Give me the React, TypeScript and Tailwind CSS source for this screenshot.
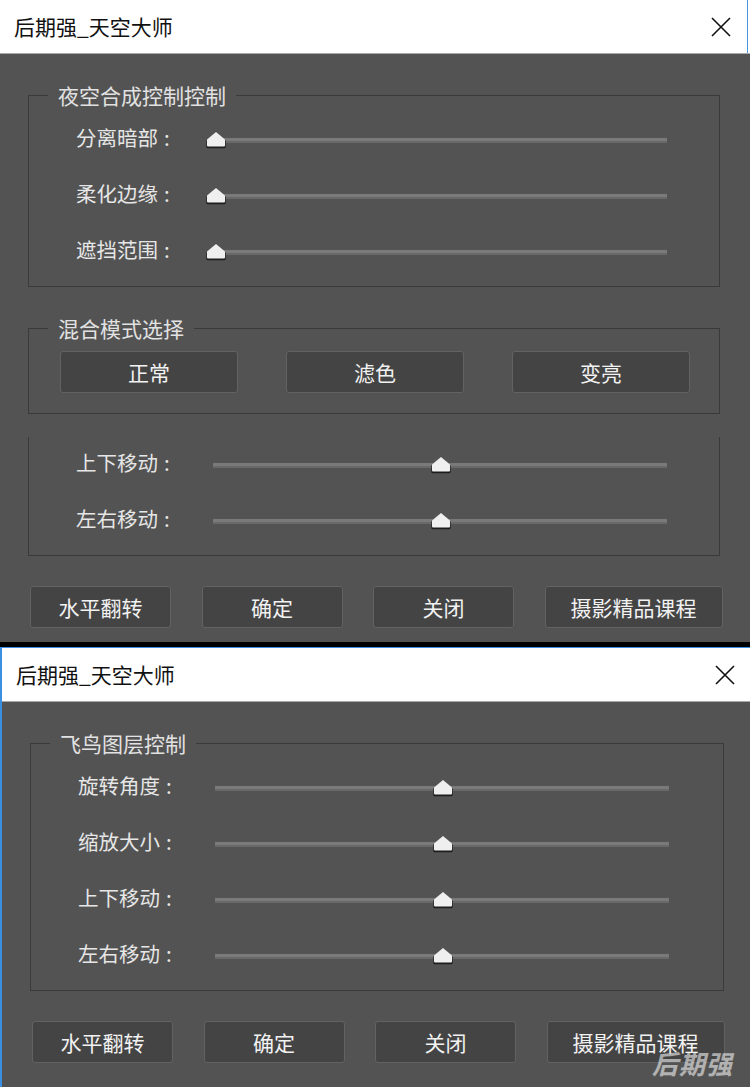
import React from "react";

const FONT = "font-['Noto_Sans_CJK_SC','Noto_Sans',sans-serif]";

function Thumb() {
  return (
    <svg width="22" height="18" viewBox="0 0 22 18">
      <path d="M11 2.2 L20.6 9.6 V16 Q20.6 17.2 19.4 17.2 H2.6 Q1.4 17.2 1.4 16 V9.6 Z" fill="#1c1c1c" />
      <path d="M11 1 L20 8.4 V14.6 Q20 15.6 19 15.6 H3 Q2 15.6 2 14.6 V8.4 Z" fill="#efefef" />
    </svg>
  );
}

function CloseX() {
  return (
    <svg width="20" height="20" viewBox="0 0 20 20">
      <path d="M1 1 L19 19 M19 1 L1 19" stroke="#111" strokeWidth="1.6" fill="none" />
    </svg>
  );
}

function SliderRow({ label, value }: { label: string; value: number }) {
  return (
    <div className="flex h-[56px] items-center pl-[47px]">
      <span className="-mt-[6px] flex w-[137px] shrink-0 text-[20.5px] leading-[24px] text-[#e6e6e6]">
        <span>{label}</span>
        <span className="ml-[6px]">:</span>
      </span>
      <div className="relative h-[5px] w-[454px] shrink-0">
        <div className="h-[3px] bg-[#7a7a7a]" />
        <div className="h-[2px] bg-[#696969]" />
        <div className="absolute top-1/2 -translate-y-1/2" style={{ left: 3 + value * 449 - 11 }}>
          <Thumb />
        </div>
      </div>
    </div>
  );
}

function Btn({ children, wide }: { children: React.ReactNode; wide?: boolean }) {
  return (
    <div
      className={
        "flex h-[42px] shrink-0 items-center justify-center rounded-[3px] border border-[#626262] bg-[#444444] text-[21px] leading-[24px] text-[#f2f2f2] " +
        (wide ? "w-[178px]" : "w-[141px]")
      }
    >
      {children}
    </div>
  );
}

function Group({ title, children, cls }: { title: string; children: React.ReactNode; cls: string }) {
  return (
    <fieldset className={"mx-[28px] border border-[#3a3a3a] " + cls}>
      <legend className="ml-[19px] px-[10px] text-[21px] leading-[24px] text-[#e2e2e2]">{title}</legend>
      {children}
    </fieldset>
  );
}

function TitleBar({ second }: { second?: boolean }) {
  return (
    <div className="flex h-[53px] w-full bg-white">
      <div
        className={
          "flex h-full items-center justify-between " +
          (second ? "w-[750px] shrink-0 pl-[14px] pr-[17px]" : "w-[748px] border-r border-[#4a95e0] pl-[14px] pr-[16px]")
        }
      >
        <span className="-mt-[1px] text-[21px] leading-[24px] text-[#111]">后期强_天空大师</span>
        <CloseX />
      </div>
    </div>
  );
}

function BottomButtons() {
  return (
    <div className="mt-[30px] flex gap-[30.5px] pl-[30px]">
      <Btn>水平翻转</Btn>
      <Btn>确定</Btn>
      <Btn>关闭</Btn>
      <Btn wide>摄影精品课程</Btn>
    </div>
  );
}

export default function App() {
  return (
    <div className={"w-[750px] h-[1087px] overflow-hidden bg-[#535353] " + FONT}>
      {/* Dialog 1 */}
      <div className="w-[750px]">
        <TitleBar />
        <div className="h-[1px] bg-[#a9a9a9]" />
        <div className="flex h-[588px] w-[748px] flex-col bg-[#535353] pt-[29px]">
          <Group title="夜空合成控制控制" cls="pt-[5px] pb-[6px]">
            <SliderRow label="分离暗部" value={0} />
            <SliderRow label="柔化边缘" value={0} />
            <SliderRow label="遮挡范围" value={0} />
          </Group>
          <Group title="混合模式选择" cls="mt-[29px] pt-[11px] pb-[20px]">
            <div className="flex w-[661px] justify-between pl-[31px]">
              <Btn wide>正常</Btn>
              <Btn wide>滤色</Btn>
              <Btn wide>变亮</Btn>
            </div>
          </Group>
          <div className="mx-[28px] mt-[23px] border-x border-b border-[#3a3a3a] pb-[6px]">
            <SliderRow label="上下移动" value={0.5} />
            <SliderRow label="左右移动" value={0.5} />
          </div>
          <BottomButtons />
        </div>
      </div>
      {/* separator */}
      <div className="h-[5px] bg-black" />
      {/* Dialog 2 */}
      <div className="w-[750px] overflow-hidden border-l-2 border-t border-[#3a8fe0]">
        <div className="w-[750px]">
          <TitleBar second />
          <div className="h-[1px] bg-[#a9a9a9]" />
          <div className="relative flex h-[400px] w-[750px] flex-col bg-[#535353] pt-[29px]">
            <Group title="飞鸟图层控制" cls="pt-[5px] pb-[6px]">
              <SliderRow label="旋转角度" value={0.5} />
              <SliderRow label="缩放大小" value={0.5} />
              <SliderRow label="上下移动" value={0.5} />
              <SliderRow label="左右移动" value={0.5} />
            </Group>
            <BottomButtons />
            <div className="absolute right-[19px] top-[346px] text-[26px] font-bold italic leading-[30px] tracking-[1px] text-white/55">
              后期强
            </div>
          </div>
        </div>
      </div>
    </div>
  );
}
